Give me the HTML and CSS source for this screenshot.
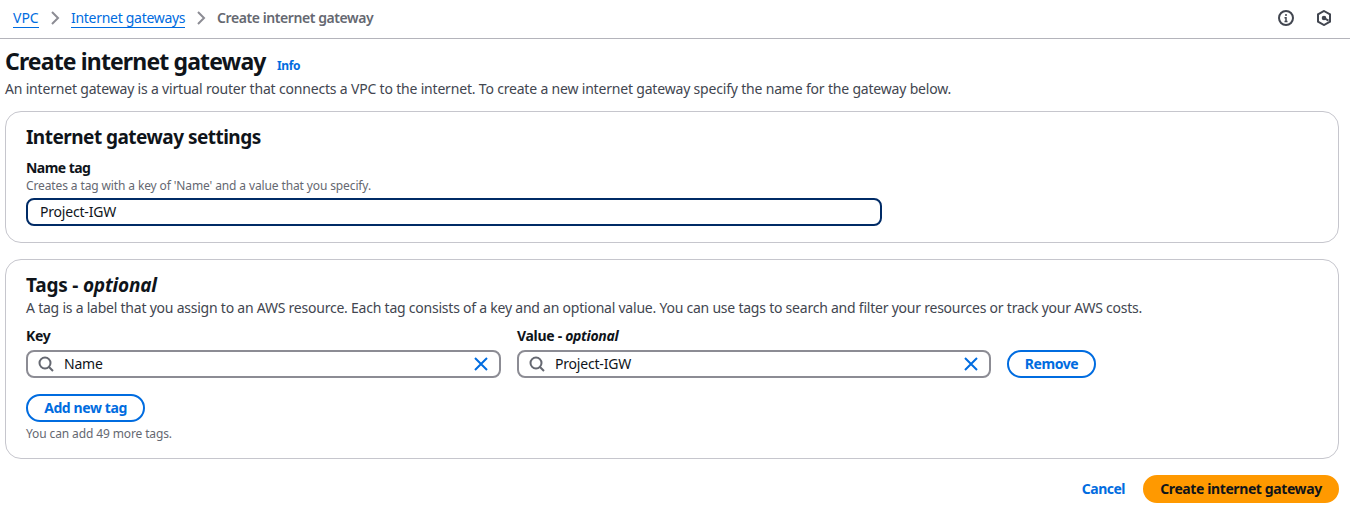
FILE: index.html
```
<!DOCTYPE html>
<html lang="en">
<head>
<meta charset="utf-8">
<title>Create internet gateway</title>
<link rel="stylesheet" href="styles.css">
</head>
<body>
<header class="topbar">
  <nav class="crumbs">
    <a class="crumb vpc" href="#">VPC</a>
    <svg class="chevron" viewBox="0 0 16 16"><path d="M5 2l6 6-6 6"/></svg>
    <a class="crumb gateways" href="#">Internet gateways</a>
    <svg class="chevron" viewBox="0 0 16 16"><path d="M5 2l6 6-6 6"/></svg>
    <span class="current">Create internet gateway</span>
  </nav>
  <div class="tools">
    <svg class="tool" viewBox="0 0 16 16"><circle cx="8" cy="8" r="7"/><path d="M8 7v5M8 4v2M6.5 7.700H8M6.5 11.5h3" stroke-width="1.5"/></svg>
    <svg class="tool" viewBox="0 0 16 16"><path d="M8 1l6 3.400v7.200L8 15l-6-3.400V4.400z"/><circle cx="8" cy="8" r="1.300" fill="currentColor"/><path d="M8 8l4.500 2.600"/></svg>
  </div>
</header>
<main class="page">
  <div class="title-row"><h1 class="title">Create internet gateway</h1><a class="info" href="#">Info</a></div>
  <p class="description intro">An internet gateway is a virtual router that connects a VPC to the internet. To create a new internet gateway specify the name for the gateway below.</p>

  <section class="card settings">
    <h2 class="heading settings-heading">Internet gateway settings</h2>
    <label class="label name-label" for="name">Name tag</label>
    <p class="hint name-hint">Creates a tag with a key of 'Name' and a value that you specify.</p>
    <div class="field active" id="name">Project-IGW</div>
  </section>

  <section class="card tags">
    <h2 class="heading tags-heading">Tags - <em>optional</em></h2>
    <p class="description tags-text">A tag is a label that you assign to an AWS resource. Each tag consists of a key and an optional value. You can use tags to search and filter your resources or track your AWS costs.</p>
    <div class="tag-grid">
      <div class="column">
        <div class="label key-label">Key</div>
        <div class="field search">
          <svg class="glass" viewBox="0 0 16 16"><circle cx="7" cy="7" r="5.500"/><path d="M10.700 10.700L15 15"/></svg>
          <span class="entry">Name</span>
          <svg class="clear" viewBox="0 0 16 16"><path d="M2 2l12 12M14 2L2 14"/></svg>
        </div>
      </div>
      <div class="column">
        <div class="label value-label">Value - <em>optional</em></div>
        <div class="field search">
          <svg class="glass" viewBox="0 0 16 16"><circle cx="7" cy="7" r="5.500"/><path d="M10.700 10.700L15 15"/></svg>
          <span class="entry">Project-IGW</span>
          <svg class="clear" viewBox="0 0 16 16"><path d="M2 2l12 12M14 2L2 14"/></svg>
        </div>
      </div>
      <button class="button remove">Remove</button>
    </div>
    <button class="button add">Add new tag</button>
    <p class="hint tags-hint">You can add 49 more tags.</p>
  </section>

  <footer class="actions">
    <a class="cancel" href="#">Cancel</a>
    <button class="button primary">Create internet gateway</button>
  </footer>
</main>
</body>
</html>
```
FILE: styles.css
```
* { box-sizing: border-box; }
body {
  margin: 0;
  background: #fff;
  color: #0f141a;
  font: 14px/20px "Noto Sans", "Open Sans", sans-serif;
}
h1, h2, p { margin: 0; }
a { color: #006ce0; text-decoration: none; }
svg { fill: none; stroke: currentColor; flex: none; }
.topbar {
  display: flex;
  justify-content: space-between;
  align-items: center;
  height: 39px;
  padding: 0 18px 3px 13px;
  border-bottom: 1px solid #b4b4bb;
}
.crumbs { display: flex; align-items: center; white-space: nowrap; }
.crumb { height: 20px; line-height: 20px; border-bottom: 1px solid #006ce0; }
.vpc { width: 26px; }
.gateways { width: 114px; letter-spacing: -0.29px; }
.chevron { width: 16px; height: 16px; margin: 0 8px; color: #8c8c94; stroke-width: 2; }
.current { color: #656871; font-weight: 650; letter-spacing: -0.42px; }
.tools { display: flex; gap: 22px; color: #424650; }
.tool { width: 16px; height: 16px; stroke-width: 2; }
.page { padding: 10px 11px 0 5px; white-space: nowrap; }
.title-row { display: flex; align-items: baseline; height: 30px; }
.title { width: 272px; font-size: 23px; line-height: 24px; font-weight: 680; letter-spacing: -0.86px; }
.info { font-size: 12px; font-weight: 700; letter-spacing: -0.4px; }
.description { color: #424650; }
.intro { height: 32px; letter-spacing: -0.185px; }
.card { border: 1px solid #c6c6cd; border-radius: 16px; padding: 13px 20px 0; }
.settings { height: 132px; }
.heading { font-size: 19px; line-height: 24px; font-weight: 680; letter-spacing: -0.52px; }
.settings-heading { margin-bottom: 9px; }
.tags-heading { letter-spacing: -0.2px; }
.label { display: block; font-weight: 680; letter-spacing: -0.3px; }
.name-label { letter-spacing: -0.55px; }
.hint { color: #656871; font-size: 12px; line-height: 16px; letter-spacing: -0.12px; }
.field { display: flex; align-items: center; height: 28px; border: 2px solid #8c8c94; border-radius: 8px; letter-spacing: -0.2px; }
.active { width: 856px; margin-top: 4px; padding: 0 12px; border-color: #002b66; }
.tags { height: 200px; margin-top: 16px; }
.tags-text { margin-top: 1px; letter-spacing: -0.228px; }
.tag-grid { display: grid; grid-template-columns: 475px 474px auto; gap: 16px; align-items: end; justify-content: start; margin-top: 8px; }
.column .field { margin-top: 4px; }
.search { padding: 0 10px; }
.glass { width: 16px; height: 16px; color: #656871; stroke-width: 2; }
.clear { width: 16px; height: 16px; margin-left: auto; color: #006ce0; stroke-width: 2; }
.entry { margin-left: 10px; }
.button {
  display: flex;
  justify-content: center;
  align-items: center;
  height: 28px;
  padding: 0;
  border: 2px solid #006ce0;
  border-radius: 20px;
  background: #fff;
  color: #006ce0;
  font: inherit;
  font-weight: 680;
  letter-spacing: -0.4px;
}
.remove { width: 89px; }
.add { width: 119px; margin-top: 16px; }
.tags-hint { margin-top: 4px; }
.actions { display: flex; justify-content: flex-end; align-items: center; gap: 18px; margin-top: 16px; }
.cancel { font-weight: 680; letter-spacing: -0.5px; }
.primary { width: 196px; border-color: #ff9900; background: #ff9900; color: #0f141a; }
```
